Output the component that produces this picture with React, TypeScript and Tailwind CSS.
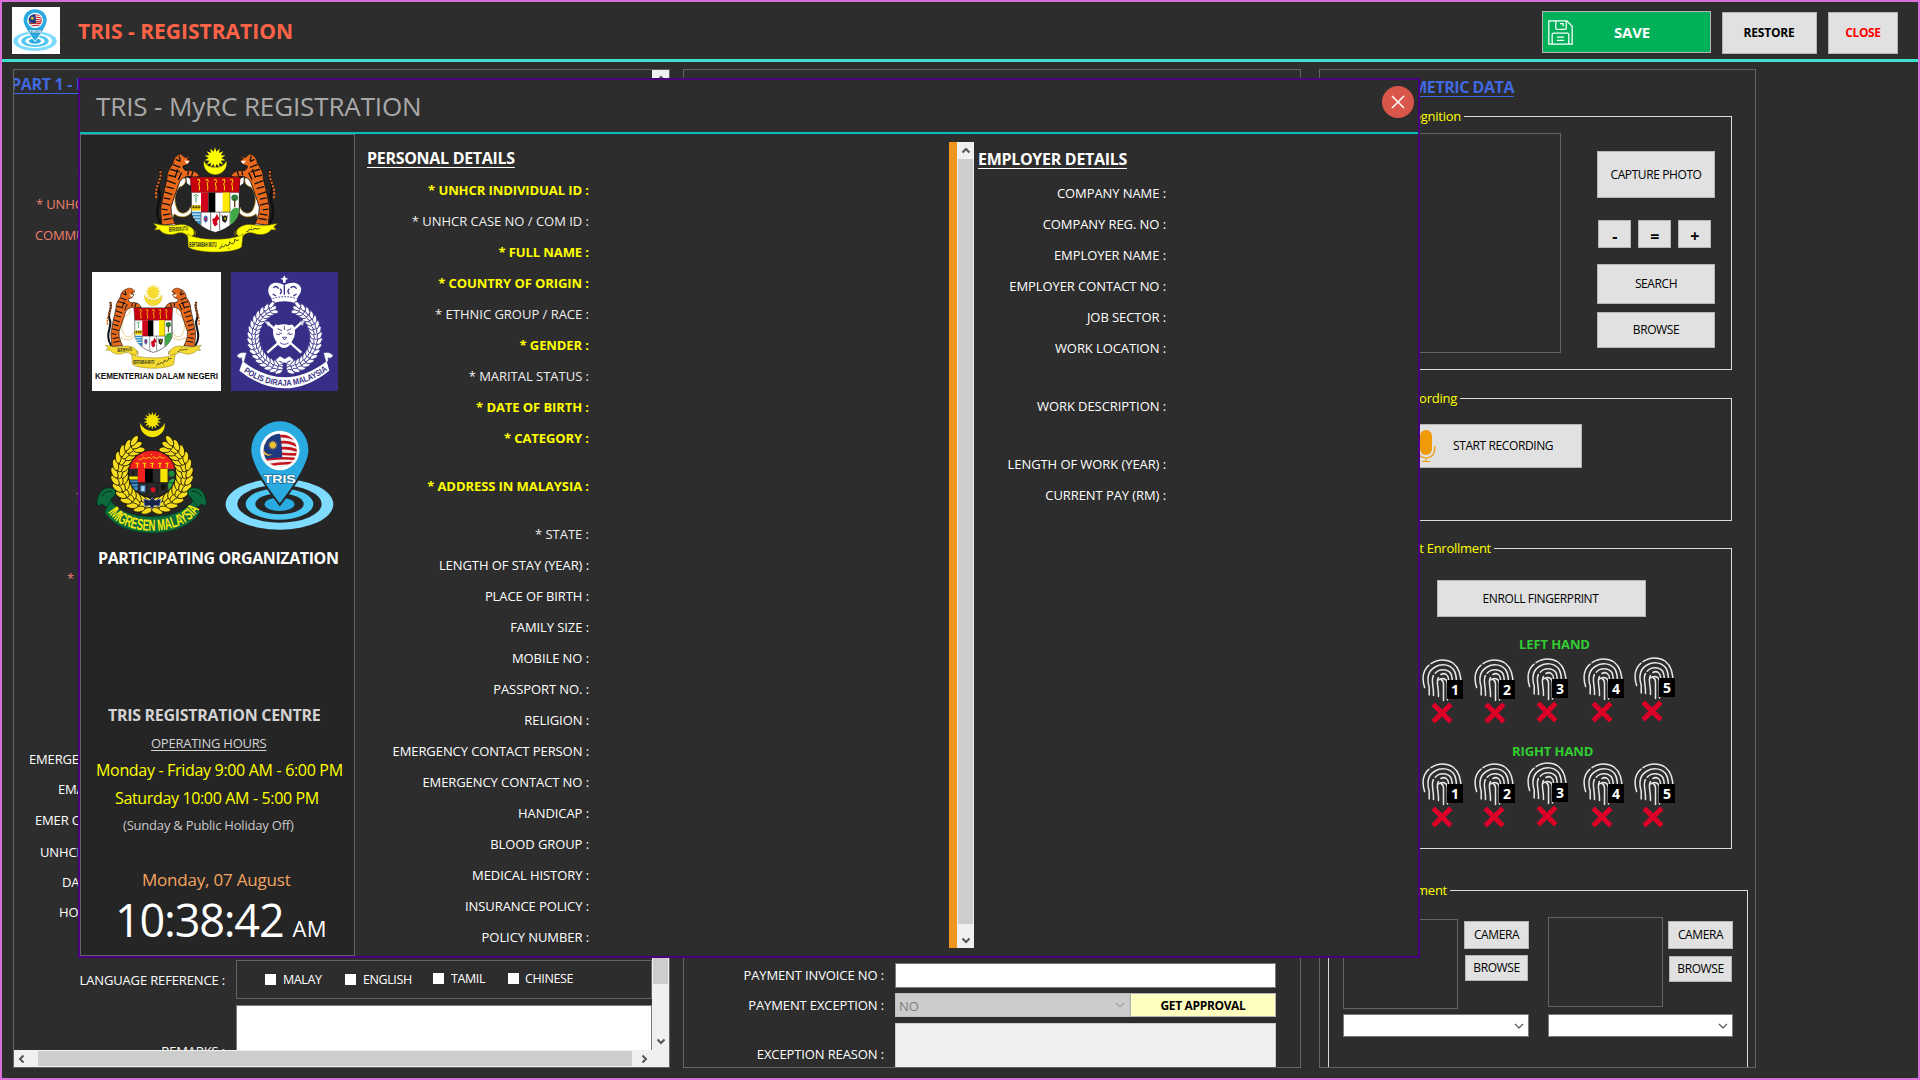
import type { ReactNode } from "react";

type Row = { text: string; h?: string; req?: boolean; dim?: boolean };

const personal: Row[] = [
  { text: "* UNHCR INDIVIDUAL ID :", req: true },
  { text: "* UNHCR CASE NO / COM ID :", dim: true },
  { text: "* FULL NAME :", req: true },
  { text: "* COUNTRY OF ORIGIN :", req: true },
  { text: "* ETHNIC GROUP / RACE :", dim: true },
  { text: "* GENDER :", req: true },
  { text: "* MARITAL STATUS :", dim: true },
  { text: "* DATE OF BIRTH :", req: true },
  { text: "* CATEGORY :", req: true },
  { text: "* ADDRESS IN MALAYSIA :", h: "h-[65px]", req: true },
  { text: "* STATE :", dim: true },
  { text: "LENGTH OF STAY (YEAR) :" },
  { text: "PLACE OF BIRTH :" },
  { text: "FAMILY SIZE :" },
  { text: "MOBILE NO :" },
  { text: "PASSPORT NO. :" },
  { text: "RELIGION :" },
  { text: "EMERGENCY CONTACT PERSON :" },
  { text: "EMERGENCY CONTACT NO :" },
  { text: "HANDICAP :" },
  { text: "BLOOD GROUP :" },
  { text: "MEDICAL HISTORY :" },
  { text: "INSURANCE POLICY :" },
  { text: "POLICY NUMBER :" },
];

const employer: Row[] = [
  { text: "COMPANY NAME :" },
  { text: "COMPANY REG. NO :" },
  { text: "EMPLOYER NAME :" },
  { text: "EMPLOYER CONTACT NO :" },
  { text: "JOB SECTOR :" },
  { text: "WORK LOCATION :" },
  { text: "WORK DESCRIPTION :", h: "h-[85px]" },
  { text: "LENGTH OF WORK (YEAR) :" },
  { text: "CURRENT PAY (RM) :" },
];

function LabelRows({ rows }: { rows: Row[] }) {
  return (
    <>
      {rows.map((r) => (
        <div
          key={r.text}
          className={`flex shrink-0 items-center justify-end text-[13px] leading-none ${r.h ?? "h-[31px]"} ${
            r.req
              ? "font-bold tracking-[-0.08px] text-[#ffff00]"
              : r.dim
                ? "tracking-[-0.02px] text-[#f0f0f0]"
                : "tracking-[-0.08px] text-white"
          }`}
        >
          {r.text}
        </div>
      ))}
    </>
  );
}

function Chevron({ dir, className = "" }: { dir: "up" | "down" | "left" | "right"; className?: string }) {
  const d = {
    up: "M1.5 6.5 L5 3 L8.5 6.5",
    down: "M1.5 3.5 L5 7 L8.5 3.5",
    left: "M6.5 1.5 L3 5 L6.5 8.5",
    right: "M3.5 1.5 L7 5 L3.5 8.5",
  }[dir];
  return (
    <svg viewBox="0 0 10 10" className={`h-[10px] w-[10px] ${className}`}>
      <path d={d} fill="none" stroke="#555" strokeWidth="2" />
    </svg>
  );
}

function starPoints(cx: number, cy: number, ro: number, ri: number, n: number) {
  return Array.from({ length: n * 2 }, (_, i) => {
    const a = (Math.PI * i) / n - Math.PI / 2;
    const r = i % 2 ? ri : ro;
    return `${(cx + r * Math.cos(a)).toFixed(1)},${(cy + r * Math.sin(a)).toFixed(1)}`;
  }).join(" ");
}

function Tiger({ dark }: { dark: string }) {
  return (
    <g>
      <path d="M242 283 C215 240 245 215 238 190 C222 165 250 145 238 120" fill="none" stroke="#111" strokeWidth="8" />
      <path d="M228 205 C222 165 250 145 238 120" fill="none" stroke="#e0641a" strokeWidth="6" strokeDasharray="7 4" />
      <path d="M300 128 C322 146 320 165 296 172 C276 200 284 230 294 244 C308 258 326 246 330 232 L336 240 C330 262 300 268 282 252 C276 262 276 276 288 288 L250 288 L262 240 Z" fill="#fff" stroke="#d8a020" strokeWidth="2" />
      <path d="M300 72 C312 64 330 70 332 82 L320 86 L330 92 L322 104 L308 108 C308 118 314 124 330 122 C344 122 354 130 358 140 L340 142 C326 136 308 140 298 156 C288 184 280 206 272 232 C272 254 278 270 286 282 L244 286 C246 266 236 246 244 220 C248 190 256 168 260 144 C260 124 270 112 278 100 C278 88 286 76 300 72 Z" fill="#e8681c" stroke="#111" strokeWidth="2.5" />
      <path d="M300 72 C312 64 328 70 332 80 L314 84 Z" fill={dark} />
      <path d="M278 104 l22 8 M270 118 l28 8 M264 136 l20 4 M260 152 l26 10 M258 170 l22 6 M252 186 l24 8 M250 204 l20 4 M246 220 l24 6 M244 238 l18 2 M248 256 l22 -4 M250 270 l24 -4 M292 118 l-8 26 M304 128 l-10 22 M324 124 l-2 12 M338 124 l-4 14 M286 88 l14 6 M296 78 l4 14" stroke="#111" strokeWidth="4" fill="none" />
      <path d="M312 92 l16 2 -8 8 z M318 142 l16 6 -4 20 -10 -8 z" fill="#fff" />
    </g>
  );
}

function CoatOfArms({ className, sun = "#ffff00", dark = "#252525" }: { className: string; sun?: string; dark?: string }) {
  return (
    <svg viewBox="218 45 375 325" preserveAspectRatio="none" className={className}>
      <polygon points={starPoints(404, 84, 32, 19, 14)} fill={sun} />
      <path d="M371 94 A34 34 0 1 0 438 94 A36 30 0 0 1 371 94 Z" fill={sun} stroke="#b8a000" strokeWidth="1" />
      <Tiger dark={dark} />
      <g transform="translate(809 0) scale(-1 1)">
        <Tiger dark={dark} />
      </g>
      <path d="M333 142 H477 V240 C477 272 440 300 405 308 C370 300 333 272 333 240 Z" fill="#fff" stroke="#111" strokeWidth="2" />
      <path d="M329 142 H480 L476 188 H334 Z" fill="#c4000f" stroke="#400" strokeWidth="1" />
      <g stroke="#ffe000" strokeWidth="3" fill="none">
        {[355, 380, 405, 430, 454].map((x) => (
          <path key={x} d={`M${x - 5} 151 l7 -3 q4 8 -2 14 q4 8 2 20`} />
        ))}
      </g>
      <rect x="362" y="188" width="22" height="59" fill="#d0021b" />
      <rect x="384" y="188" width="21" height="59" fill="#000" />
      <rect x="427" y="188" width="22" height="59" fill="#ffe800" />
      <path d="M449 188 V286 C466 274 477 258 477 240 V188" fill="none" stroke="#111" strokeWidth="1.5" />
      <path d="M450 247 Q462 228 476 236 V242 C476 260 464 276 450 285 Z" fill="#3fa845" />
      <circle cx="463" cy="204" r="10" fill="#2e7d3a" />
      <path d="M463 208 V232" stroke="#5b3b16" strokeWidth="4" />
      <path d="M347 198 V218 M340 198 q7 -8 14 0" stroke="#3a9b5c" strokeWidth="3" fill="none" />
      <path d="M334 226 H361 V242 H334 Z" fill="#f4d300" />
      <path d="M334 232 h27 M340 226 v10 M348 226 v10 M356 226 v10" stroke="#111" strokeWidth="2" />
      <path d="M334 246 H361 V286 C346 276 336 262 334 246 Z" fill="#2f8fc9" />
      <path d="M335 253 h26 M338 262 h23 M344 271 h17" stroke="#fff" strokeWidth="3" />
      <path d="M362 247 H449 M362 247 V286 M391 247 V302 M418 247 V302" stroke="#333" strokeWidth="2" />
      <path d="M370 262 q6 -10 12 0 v10 l-6 8 -6 -8 z" fill="#4a68b0" />
      <circle cx="376" cy="268" r="4" fill="#c02040" />
      <path d="M396 268 l8 -4 6 -12 4 10 4 4 -8 8 2 10 -8 6 -6 -8 z" fill="#d0021b" />
      <path d="M424 254 l6 6 4 -4 4 4 4 -6 -2 18 -6 8 -8 -6 z" fill="#222" />
      <path d="M431 264 l6 0 -3 8 z" fill="#ffe000" />
      <path d="M219 281 C240 284 262 292 288 286 C306 282 326 284 340 300 L342 312 L326 330 C322 312 308 306 292 310 C268 320 246 312 238 300 L222 300 L230 292 Z" fill={sun} stroke="#6a5d00" strokeWidth="1.5" />
      <path d="M591 281 C570 284 548 292 522 286 C504 282 484 284 470 300 L468 312 L484 330 C488 312 502 306 518 310 C542 320 564 312 572 300 L588 300 L580 292 Z" fill={sun} stroke="#6a5d00" strokeWidth="1.5" />
      <path d="M322 312 C345 334 465 334 488 312 L484 352 C462 372 348 372 324 352 Z" fill={sun} stroke="#6a5d00" strokeWidth="1.5" />
      <path d="M340 304 q8 -4 4 14 M469 304 q-8 -4 -4 14" stroke="#8a7a00" strokeWidth="3" fill="none" />
      <text x="266" y="306" fontSize="19" fontWeight="700" fontFamily="Liberation Sans" textLength="58" lengthAdjust="spacingAndGlyphs" fill="#222" transform="rotate(-4 268 308)">BERSEKUTU</text>
      <text x="327" y="353" fontSize="20" fontWeight="700" fontFamily="Liberation Sans" textLength="82" lengthAdjust="spacingAndGlyphs" fill="#222">BERTAMBAH MUTU</text>
      <path d="M416 356 q6 2 8 -8 q6 10 12 -4 q2 8 10 2 l2 -10 q6 12 14 2 l2 -10 q2 8 12 2 M424 344 l2 -2 M444 356 l3 0 M498 306 q8 0 10 -8 q8 6 16 -2 q6 4 14 0 M512 292 l3 0" stroke="#222" strokeWidth="2.5" fill="none" />
    </svg>
  );
}

function Leaves({ cx, cy, r, from, to, n, len, wid, fill, stroke }: { cx: number; cy: number; r: number; from: number; to: number; n: number; len: number; wid: number; fill: string; stroke: string }) {
  return (
    <g fill={fill} stroke={stroke} strokeWidth="2.5">
      {Array.from({ length: n }, (_, i) => {
        const deg = from + ((to - from) * i) / (n - 1);
        const dir = to > from ? 1 : -1;
        return [-1, 0, 1].map((k) => {
          const a = (deg * Math.PI) / 180;
          const rr = r + k * wid * 1.1;
          return (
            <ellipse
              key={`${i}${k}`}
              cx={cx + rr * Math.cos(a)}
              cy={cy + rr * Math.sin(a)}
              rx={len}
              ry={wid / 1.6}
              transform={`rotate(${deg + 90 - k * dir * 28} ${cx + rr * Math.cos(a)} ${cy + rr * Math.sin(a)})`}
            />
          );
        });
      })}
    </g>
  );
}

function PoliceBadge() {
  return (
    <svg viewBox="453 426 321 357" preserveAspectRatio="none" className="h-[119px] w-[107px] bg-[#372f87]">
      <g fill="#fff">
        <path d="M613 436 l4 8 8 2 -8 4 v8 h-8 v-8 l-8 -4 8 -2 z" />
        <path d="M566 474 C572 452 600 456 613 466 C626 456 656 452 663 474 C666 486 656 496 652 504 L648 520 Q613 508 578 520 L574 504 C568 496 562 486 566 474 Z" />
      </g>
      <path d="M580 474 q8 -10 16 2 M600 492 q8 -8 0 -16 M628 492 q-8 -8 0 -16 M632 474 q8 -10 18 2 M578 492 l10 6 M640 498 l10 -6 M613 466 v28" stroke="#372f87" strokeWidth="4" fill="none" />
      <path d="M578 506 Q613 494 650 506" stroke="#372f87" strokeWidth="3" fill="none" strokeDasharray="5 4" />
      <Leaves cx={614} cy={622} r={94} from={100} to={248} n={17} len={12} wid={10} fill="#fff" stroke="#372f87" />
      <Leaves cx={614} cy={622} r={94} from={80} to={-68} n={17} len={12} wid={10} fill="#fff" stroke="#372f87" />
      <path d="M562 578 L664 668 M664 578 L562 668" stroke="#fff" strokeWidth="7" />
      <path d="M552 572 l18 4 -4 14 z M676 566 l-18 10 10 12 z" fill="#fff" opacity="0.7" />
      <path d="M582 590 q4 -10 12 -4 q18 -6 34 0 q10 -6 14 4 q8 20 -4 40 q-10 24 -26 24 q-16 0 -26 -24 q-12 -20 -4 -40" fill="#fff" />
      <path d="M592 596 l14 6 M634 596 l-14 6 M588 612 l12 2 M638 612 l-12 2 M598 608 l8 4 M630 608 l-8 4 M607 622 h13 l-6 8 z M600 638 q14 10 26 0 M613 588 v12" stroke="#372f87" strokeWidth="2.5" fill="none" />
      <path d="M586 690 l14 -12 14 8 14 -8 14 12 -12 16 -16 -8 -16 8 z" fill="#fff" stroke="#372f87" strokeWidth="2" />
      <path d="M598 694 l10 4 M620 698 l12 -6" stroke="#372f87" strokeWidth="3" />
      <path d="M500 668 q-22 -4 -30 10 q8 10 16 6 q-4 10 6 14 z M730 668 q22 -4 30 10 q-8 10 -16 6 q4 10 -6 14 z" fill="#fff" stroke="#372f87" strokeWidth="2" />
      <path d="M488 694 Q614 790 740 694 L748 722 Q614 828 478 722 Z" fill="#fff" />
      <path id="pdrm-banner" d="M487 723 Q614 812 742 721" fill="none" />
      <text fontSize="25" fontWeight="700" fontFamily="Liberation Sans" fill="#372f87">
        <textPath href="#pdrm-banner" startOffset="4" textLength="272" lengthAdjust="spacingAndGlyphs">
          POLIS DIRAJA MALAYSIA
        </textPath>
      </text>
    </svg>
  );
}

function ImmigrationBadge() {
  return (
    <svg viewBox="48 60 338 372" preserveAspectRatio="none" className="h-[123px] w-[112px]">
      <polygon points={starPoints(218, 89, 27, 16, 14)} fill="#f5e400" />
      <path d="M182 96 A37 37 0 1 0 255 96 A38 34 0 0 1 182 96 Z" fill="#f5e400" />
      <Leaves cx={217} cy={250} r={98} from={98} to={242} n={13} len={18} wid={14} fill="#f5dc1e" stroke="#1a1600" />
      <Leaves cx={217} cy={250} r={98} from={82} to={-62} n={13} len={18} wid={14} fill="#f5dc1e" stroke="#1a1600" />
      <clipPath id="imi-disc">
        <circle cx="217" cy="250" r="71" />
      </clipPath>
      <g clipPath="url(#imi-disc)">
        <rect x="140" y="175" width="160" height="160" fill="#2a2a2a" />
        <rect x="140" y="175" width="160" height="60" fill="#f0201e" />
        <rect x="174" y="235" width="22" height="41" fill="#f0201e" />
        <rect x="196" y="235" width="23" height="41" fill="#000" />
        <rect x="242" y="235" width="22" height="41" fill="#f5e400" />
        <rect x="147" y="258" width="27" height="9" fill="#f5e400" />
        <rect x="147" y="270" width="27" height="30" fill="#3a90cc" />
        <path d="M147 279 h27 M147 289 h27" stroke="#1c4c70" strokeWidth="3" />
        <path d="M266 276 q8 -14 24 -10 v20 q-8 14 -18 18 l-6 -8 z" fill="#2faa4a" />
        <circle cx="276" cy="250" r="9" fill="#1f8a3a" />
        <path d="M160 242 v14" stroke="#111" strokeWidth="4" />
        <rect x="183" y="286" width="13" height="18" fill="#a9d7f0" stroke="#3468b0" strokeWidth="3" />
        <path d="M212 294 l10 -4 6 6 -2 8 -10 2 z" fill="#e01020" />
        <path d="M242 282 l18 0 -4 18 -10 0 z" fill="#111" />
        <path d="M203 278 v34 M233 278 v34 M147 277 h140" stroke="#111" strokeWidth="2" />
      </g>
      <path d="M176 204 q10 8 14 -4 q8 8 18 0 q8 8 14 -2 q8 10 18 0 q8 6 16 4 M186 194 h3 M214 192 h3 M240 192 h3" stroke="#f5e400" strokeWidth="2.5" fill="none" />
      <g stroke="#f5e400" strokeWidth="3.5" fill="none">
        {[172, 194, 217, 240, 262].map((x) => (
          <path key={x} d={`M${x - 5} 218 l8 0 q-4 6 -2 14`} />
        ))}
      </g>
      <circle cx="217" cy="250" r="71" fill="none" stroke="#111" strokeWidth="2" />
      <path d="M50 338 C54 300 76 286 100 294 C112 300 108 318 96 324 L84 354 L66 342 L56 348 Z M382 338 C378 300 356 286 332 294 C320 300 324 318 336 324 L348 354 L368 342 L378 348 Z" fill="#0c6b3c" stroke="#052a18" strokeWidth="3" />
      <path d="M66 318 q14 -20 30 -14 M366 318 q-14 -20 -30 -14" stroke="#052a18" strokeWidth="3" fill="none" />
      <path d="M92 330 C130 396 304 396 342 330 L362 366 C310 450 124 450 74 366 Z" fill="#0c6b3c" stroke="#06351e" strokeWidth="2" />
      <path d="M192 326 l18 4 8 -8 8 8 18 -4 -4 22 -16 -2 -6 12 -8 -12 -16 2 z" fill="#16234a" stroke="#8fb0e0" strokeWidth="2" />
      <path id="imi-banner" d="M82 364 C130 442 306 442 356 362" fill="none" />
      <text fontSize="48" fontWeight="700" fontFamily="Liberation Sans" fill="#f8ec10">
        <textPath href="#imi-banner" startOffset="3" textLength="314" lengthAdjust="spacingAndGlyphs">
          IMIGRESEN MALAYSIA
        </textPath>
      </text>
    </svg>
  );
}

function TrisLogo({ className, gap, id }: { className: string; gap: string; id: string }) {
  return (
    <svg viewBox="436 92 328 326" preserveAspectRatio="none" className={className}>
      <ellipse cx="600" cy="341" rx="162" ry="76" fill="#80dcff" />
      <ellipse cx="600" cy="340" rx="127" ry="56" fill={gap} />
      <ellipse cx="600" cy="340" rx="102" ry="47" fill="#4cc6f2" />
      <ellipse cx="600" cy="340" rx="73" ry="31" fill={gap} />
      <ellipse cx="600" cy="341" rx="45" ry="20" fill="#29abe2" />
      <path d="M601 338 C580 312 515 226 515 179 A86 86 0 0 1 687 179 C687 226 622 312 601 338 Z" fill="#29abe2" stroke={gap} strokeWidth="12" />
      <path d="M601 338 C580 312 515 226 515 179 A86 86 0 0 1 687 179 C687 226 622 312 601 338 Z" fill="#29abe2" />
      <circle cx="601" cy="180" r="59" fill="#fff" />
      <clipPath id={id}>
        <circle cx="602" cy="180" r="50" />
      </clipPath>
      <g clipPath={`url(#${id})`}>
        <rect x="550" y="128" width="104" height="104" fill="#f0f0f0" />
        <g fill="none" stroke="#c4161c" strokeWidth="8">
          <path d="M596 138 q30 -4 60 14" />
          <path d="M600 156 q30 -4 56 12" />
          <path d="M602 174 q30 -4 54 8" />
          <path d="M602 190 q30 2 54 2" />
          <path d="M552 208 q50 -8 102 -2" />
          <path d="M556 226 q50 -10 92 -8" />
        </g>
        <path d="M550 128 L600 126 Q608 160 608 202 Q580 200 550 208 Z" fill="#1d3a80" />
        <path d="M562 156 a20 20 0 1 0 18 34 a18 18 0 1 1 -18 -34" fill="#f2c230" />
        <polygon points={starPoints(580, 164, 15, 8, 12)} fill="#f2c230" />
      </g>
      <text x="552" y="277" fontSize="34" fontWeight="700" fontFamily="Liberation Sans" textLength="97" lengthAdjust="spacingAndGlyphs" stroke="#1c6f9a" strokeWidth="4" paintOrder="stroke" fill="#fff">TRIS</text>
    </svg>
  );
}

function WinButton({ children, className }: { children: ReactNode; className: string }) {
  return (
    <button className={`flex shrink-0 items-center justify-center border border-[#b5b5b5] bg-[#e1e1e1] text-[12px] leading-none tracking-[-0.4px] whitespace-nowrap text-black ${className}`}>
      {children}
    </button>
  );
}

function GroupBox({ legend, legendPos, className, children }: { legend: string; legendPos: string; className: string; children: ReactNode }) {
  return (
    <section className={`relative shrink-0 border border-[#dcdcdc] ${className}`}>
      <span className={`absolute -top-[9px] bg-[#2d2d2d] pr-[3px] text-[13px] leading-[17px] tracking-[-0.25px] whitespace-nowrap text-[#ffff00] ${legendPos}`}>{legend}</span>
      {children}
    </section>
  );
}

function Finger({ n, className, mark = "left-[9px]" }: { n: number; className: string; mark?: string }) {
  return (
    <div className={`relative h-[66px] w-[42px] shrink-0 ${className}`}>
      <svg viewBox="0 0 42 44" className="h-[44px] w-[42px]" fill="none" stroke="#e8e8e8" strokeWidth="1.5" strokeLinecap="round">
        <path d="M2.6 28.5 C0 20 0 12 7 6.2" />
        <path d="M9 4.6 C16 -.4 25 0 31 4 C37 8.500 39.500 15 39 27" />
        <path d="M7.200 36 V28 C4.500 19 6 12 13 8 C19 4.500 27 5 31.500 10.500 C34 14 34.500 18 34.500 24" />
        <path d="M11.500 36.500 C12 27 8.500 21 11.500 16.500 M13.200 14.200 C17 9.500 25 9.500 28.500 14 C30.500 17 30.200 20 30.500 26" />
        <path d="M16.500 37.500 C17 28 13.500 23 16.500 18.500 M19 15.500 C23 13 26.500 16.500 26.500 20 V30" />
        <path d="M21.500 41.500 V25 C21.500 22.500 20 21 19 20.500 M16.500 21 C20 18 25 19.500 25.300 24 L25.500 41" />
      </svg>
      <span className="absolute top-[21px] left-[25px] flex h-[19px] w-4 items-center justify-center bg-black pt-px text-[14px] leading-none font-bold text-white">{n}</span>
      <svg viewBox="0 0 22 22" className={`absolute top-[43px] h-[22px] w-[22px] ${mark}`}>
        <path d="M2.200 2.200 L19.800 19.800 M19.800 2.200 L2.200 19.800" stroke="#dc0028" strokeWidth="5" />
      </svg>
    </div>
  );
}

function Select({ className }: { className: string }) {
  return (
    <div className={`flex h-[23px] shrink-0 items-center justify-end border border-[#7a7a7a] bg-white pr-1 ${className}`}>
      <svg viewBox="0 0 10 10" className="h-[10px] w-[10px]">
        <path d="M1 3 L5 7 L9 3" fill="none" stroke="#555" strokeWidth="1.200" />
      </svg>
    </div>
  );
}

function LeftPanel() {
  const label = "flex shrink-0 items-center text-[13px] leading-none tracking-[-0.15px] whitespace-nowrap";
  return (
    <section className="flex h-[999px] w-[657px] shrink-0 flex-col border border-[#646464]">
      <div className="flex h-[980px]">
        <div className="flex w-[638px] flex-col overflow-hidden">
          <div className="-ml-[3px] flex h-[27px] shrink-0 items-center text-[16px] leading-none font-bold tracking-[-0.3px] text-[#4169e1] underline underline-offset-[3px]">PART 1 - PERSONAL</div>
          <div className={`${label} mt-[59px] h-8 pl-[63px] text-[#f0806e]`}>*</div>
          <div className={`${label} h-8 pl-[22px] text-[#f0806e]`}>* UNHCR ID</div>
          <div className={`${label} h-[30px] pl-[21px] text-[#f0806e]`}>COMMUNITY</div>
          <div className={`${label} mt-[230px] h-8 pl-[62px] text-[#f0806e]`}>*</div>
          <div className={`${label} mt-[50px] h-8 pl-[53px] text-[#f0806e]`}>*</div>
          <div className={`${label} mt-[150px] h-[31px] pl-[15px] text-white`}>EMERGENCY</div>
          <div className={`${label} h-[29px] pl-[44px] text-white`}>EMAIL</div>
          <div className={`${label} h-[33px] pl-[21px] text-white`}>EMER CONTACT</div>
          <div className={`${label} h-[31px] pl-[26px] text-white`}>UNHCR</div>
          <div className={`${label} h-[29px] pl-[48px] text-white`}>DATE</div>
          <div className={`${label} h-[30px] pl-[45px] text-white`}>HOME</div>
          <div className="mt-[33px] flex h-[39px] shrink-0">
            <div className={`${label} w-[222px] justify-end pt-[2px] pr-[11px] text-white`}>LANGUAGE REFERENCE :</div>
            <div className="flex w-[416px] items-center border border-[#646464] pt-[2px] pl-7 text-[12.5px] leading-none tracking-[-0.4px] text-white">
              <i className="-mt-[2px] h-[11px] w-[11px] bg-white" />
              <span className="w-[62px] shrink-0 pl-[7px]">MALAY</span>
              <i className="-mt-[2px] ml-[7px] h-[11px] w-[11px] bg-white" />
              <span className="w-[70px] shrink-0 pl-[7px]">ENGLISH</span>
              <i className="-mt-1 ml-[7px] h-[11px] w-[11px] bg-white" />
              <span className="-mt-[2px] w-[58px] shrink-0 pl-[7px]">TAMIL</span>
              <i className="-mt-1 ml-[6px] h-[11px] w-[11px] bg-white" />
              <span className="-mt-[2px] pl-[6px]">CHINESE</span>
            </div>
          </div>
          <div className="mt-[6px] flex h-[45px] shrink-0 overflow-hidden">
            <div className="flex w-[222px] shrink-0 items-start justify-end pt-[37px] pr-[11px] text-[13px] leading-[18px] tracking-[-0.15px] text-white">REMARKS :</div>
            <div className="h-[60px] w-[416px] border border-[#7a7a7a] bg-white" />
          </div>
        </div>
        <div className="flex w-[17px] flex-col items-center bg-[#f0f0f0]">
          <div className="flex h-[17px] w-full shrink-0 items-center justify-center">
            <Chevron dir="up" />
          </div>
          <div className="h-[897px] w-[15px] shrink-0 bg-[#cdcdcd]" />
          <div className="flex flex-1 items-end pb-1">
            <Chevron dir="down" />
          </div>
        </div>
      </div>
      <div className="flex h-[17px] items-center bg-[#f0f0f0]">
        <div className="flex w-6 items-center pl-[3px]">
          <Chevron dir="left" />
        </div>
        <div className="h-[15px] w-[594px] bg-[#cdcdcd]" />
        <div className="flex items-center pl-[7px]">
          <Chevron dir="right" />
        </div>
      </div>
    </section>
  );
}

function PaymentPanel() {
  const label = "flex w-[200px] shrink-0 items-center justify-end text-[13px] leading-none tracking-[-0.12px] text-white";
  return (
    <section className="ml-[13px] flex h-[999px] w-[618px] shrink-0 flex-col overflow-hidden border border-[#646464] pt-[893px]">
      <div className="flex h-[25px] shrink-0">
        <div className={label}>PAYMENT INVOICE NO :</div>
        <div className="ml-[11px] w-[381px] border border-[#7a7a7a] bg-white" />
      </div>
      <div className="mt-[5px] flex h-6 shrink-0">
        <div className={label}>PAYMENT EXCEPTION :</div>
        <div className="ml-[11px] flex w-[235px] items-center justify-between border border-[#bfbfbf] bg-[#cccccc] pr-1 pl-[3px] text-[13px] leading-none text-[#7e7e7e]">
          <span className="pt-[2px]">NO</span>
          <svg viewBox="0 0 10 10" className="h-[10px] w-[10px]">
            <path d="M1 3 L5 7 L9 3" fill="none" stroke="#a0a0a0" strokeWidth="1.200" />
          </svg>
        </div>
        <button className="w-[146px] border border-[#b5b5b5] bg-[#ffffc0] pt-px text-[12px] leading-none font-bold tracking-[-0.35px] text-black">GET APPROVAL</button>
      </div>
      <div className="mt-[6px] flex h-[62px] shrink-0">
        <div className={label}>EXCEPTION REASON :</div>
        <div className="ml-[11px] w-[381px] border border-[#cccccc] bg-[#f0f0f0]" />
      </div>
    </section>
  );
}

function BiometricPanel() {
  return (
    <section className="ml-[18px] flex h-[999px] w-[437px] shrink-0 flex-col overflow-hidden border border-[#646464] pl-2">
      <div className="flex h-[33px] w-[186px] shrink-0 items-center justify-end text-[16px] leading-none font-bold tracking-[-0.45px] whitespace-nowrap text-[#4169e1] underline underline-offset-[3px]">BIOMETRIC DATA</div>
      <GroupBox legend="Facial Recognition" legendPos="right-[267px]" className="mt-[13px] flex h-[254px] w-[404px] pt-4 pl-[14px]">
        <div className="h-[220px] w-[218px] shrink-0 border border-[#646464]" />
        <div className="ml-[36px] flex w-[118px] shrink-0 flex-col pt-[18px]">
          <WinButton className="h-[47px] w-[118px]">CAPTURE PHOTO</WinButton>
          <div className="mt-[22px] flex gap-[7px] pl-px">
            {["-", "=", "+"].map((s) => (
              <WinButton key={s} className="h-7 w-[33px] pt-[3px] text-[16px] font-bold">
                {s}
              </WinButton>
            ))}
          </div>
          <WinButton className="mt-4 h-10 w-[118px]">SEARCH</WinButton>
          <WinButton className="mt-2 h-9 w-[118px]">BROWSE</WinButton>
        </div>
      </GroupBox>
      <GroupBox legend="Voice Recording" legendPos="right-[271px]" className="mt-7 h-[123px] w-[404px] pt-[25px] pl-[76px]">
        <button className="flex h-[44px] w-[177px] items-center border border-[#b5b5b5] bg-[#e1e1e1] pl-[10px] text-[12px] leading-none tracking-[-0.4px] text-black">
          <svg viewBox="0 0 20 34" className="h-[34px] w-5 shrink-0" fill="none" stroke="#f09a0a" strokeWidth="1.200">
            <rect x="4" y="1" width="12" height="25" rx="6" fill="#f09a0a" stroke="none" />
            <path d="M1.200 17 V20 C1.200 32 18.800 32 18.800 20 V17 M10 29 V32 M6 32.500 H14" />
          </svg>
          <span className="pl-[17px] whitespace-nowrap">START RECORDING</span>
        </button>
      </GroupBox>
      <GroupBox legend="Fingerprint Enrollment" legendPos="right-[237px]" className="mt-[27px] flex h-[301px] w-[404px] flex-col pt-[31px]">
        <WinButton className="ml-[108px] h-[37px] w-[209px] pr-[2px]">ENROLL FINGERPRINT</WinButton>
        <div className="mt-[17px] ml-[190px] flex h-5 shrink-0 items-center text-[13px] leading-none font-bold tracking-[-0.1px] text-[#32cd32]">LEFT HAND</div>
        <div className="mt-[3px] flex shrink-0 pl-[93px]">
          <Finger n={1} className="mt-[2px]" />
          <Finger n={2} className="mt-[2px] ml-[10px]" mark="left-[10px]" />
          <Finger n={3} className="mt-px ml-[11px]" />
          <Finger n={4} className="mt-px ml-[14px]" mark="left-[8px]" />
          <Finger n={5} className="ml-[9px]" mark="left-[7px]" />
        </div>
        <div className="mt-[16px] ml-[183px] flex h-5 shrink-0 items-center text-[13px] leading-none font-bold tracking-[-0.1px] text-[#32cd32]">RIGHT HAND</div>
        <div className="mt-px flex shrink-0 pl-[93px]">
          <Finger n={1} className="mt-px" />
          <Finger n={2} className="mt-px ml-[10px]" />
          <Finger n={3} className="ml-[11px]" />
          <Finger n={4} className="mt-px ml-[14px]" mark="left-[8px]" />
          <Finger n={5} className="mt-px ml-[9px]" mark="left-[8px]" />
        </div>
      </GroupBox>
      <GroupBox legend="Document Attachment" legendPos="right-[297px]" className="mt-[41px] flex h-[190px] w-[420px] pl-[14px]">
        <div className="w-[186px] shrink-0 pt-7">
          <div className="flex h-[95px] justify-between">
            <div className="h-[90px] w-[115px] border border-[#646464]" />
            <div className="flex flex-col items-center pt-[2px]">
              <WinButton className="h-7 w-[65px]">CAMERA</WinButton>
              <WinButton className="mt-[6px] h-[26px] w-[63px]">BROWSE</WinButton>
            </div>
          </div>
          <Select className="w-[186px]" />
        </div>
        <div className="ml-[19px] w-[185px] shrink-0 pt-[26px]">
          <div className="flex h-[97px] justify-between">
            <div className="h-[90px] w-[115px] border border-[#646464]" />
            <div className="flex flex-col items-center pt-1">
              <WinButton className="h-7 w-[65px]">CAMERA</WinButton>
              <WinButton className="mt-[7px] h-[26px] w-[63px]">BROWSE</WinButton>
            </div>
          </div>
          <Select className="w-[185px]" />
        </div>
      </GroupBox>
    </section>
  );
}

function Sidebar() {
  return (
    <aside className="flex h-[822px] w-[275px] shrink-0 flex-col border border-[#646464] bg-[#252525]">
      <CoatOfArms className="mt-[10px] ml-[72px] h-[108px] w-[125px] shrink-0" />
      <div className="mt-[19px] ml-[11px] flex shrink-0 gap-[10px]">
        <div className="h-[119px] w-[129px] bg-white pt-[10px]">
          <CoatOfArms className="ml-[13px] h-[87px] w-[97px]" sun="#f6dc30" dark="#e0641a" />
          <svg viewBox="0 0 129 14" className="-mt-px h-[14px] w-[129px]">
            <text x="3" y="10.5" fontSize="9" fontWeight="700" fontFamily="Liberation Sans" textLength="123" lengthAdjust="spacingAndGlyphs" fill="#111">KEMENTERIAN DALAM NEGERI</text>
          </svg>
        </div>
        <PoliceBadge />
      </div>
      <div className="mt-5 ml-[15px] flex shrink-0">
        <ImmigrationBadge />
        <TrisLogo className="mt-[10px] ml-[17px] h-[109px] w-[109px]" gap="#252525" id="flag-side" />
      </div>
      <div className="mt-[14px] ml-[17px] flex h-5 shrink-0 items-center text-[16px] leading-none font-bold tracking-[-0.4px] whitespace-nowrap text-white">PARTICIPATING ORGANIZATION</div>
      <div className="mt-[137px] ml-[27px] flex h-5 shrink-0 items-center text-[16px] leading-none font-bold tracking-[-0.3px] whitespace-nowrap text-[#d3d3d3]">TRIS REGISTRATION CENTRE</div>
      <div className="mt-2 ml-[70px] h-5 shrink-0 text-[13px] leading-5 tracking-[-0.25px] text-[#d3d3d3] underline underline-offset-[2px]">OPERATING HOURS</div>
      <div className="mt-[7px] ml-[15px] flex h-5 shrink-0 items-center text-[16px] leading-none tracking-[-0.32px] whitespace-nowrap text-[#ffff00]">Monday - Friday 9:00 AM - 6:00 PM</div>
      <div className="mt-2 ml-[34px] flex h-5 shrink-0 items-center text-[16px] leading-none tracking-[-0.35px] whitespace-nowrap text-[#ffff00]">Saturday 10:00 AM - 5:00 PM</div>
      <div className="mt-[7px] ml-[42px] flex h-5 shrink-0 items-center text-[13px] leading-none tracking-[-0.2px] whitespace-nowrap text-[#c8c8c8]">(Sunday &amp; Public Holiday Off)</div>
      <div className="mt-[34px] ml-[61px] flex h-5 shrink-0 items-center text-[17px] leading-none tracking-[-0.2px] whitespace-nowrap text-[#f4a460]">Monday, 07 August</div>
      <div className="mt-[6px] ml-[34px] flex h-[50px] shrink-0 items-baseline leading-[50px] whitespace-nowrap text-white">
        <span className="text-[45px] tracking-[-1.2px]">10:38:42</span>
        <span className="ml-[9px] text-[22px] tracking-[0.5px]">AM</span>
      </div>
    </aside>
  );
}

function RegistrationDialog() {
  const heading = "flex h-5 shrink-0 items-center text-[16px] leading-none font-bold tracking-[-0.3px] whitespace-nowrap text-white underline underline-offset-[3px]";
  return (
    <div className="absolute top-[76px] left-[76px] flex h-[880px] w-[1342px] flex-col border-2 border-[#4b0082] bg-[#2d2d2d]">
      <header className="flex h-[54px] shrink-0 justify-between border-b-2 border-[#00c0c0] pl-4">
        <h2 className="pt-[3px] text-[26px] leading-[46px] tracking-[-0.12px] text-[#a9a9a9]">TRIS - MyRC REGISTRATION</h2>
        <span className="mt-[6px] mr-[4px] flex h-8 w-8 items-center justify-center rounded-full bg-[#d9574a]">
          <svg viewBox="0 0 14 14" className="h-[14px] w-[14px]">
            <path d="M1 1 L13 13 M13 1 L1 13" stroke="#fff" strokeWidth="1.500" />
          </svg>
        </span>
      </header>
      <div className="flex flex-1">
        <Sidebar />
        <div className="flex w-[234px] shrink-0 flex-col pt-[14px] pl-3">
          <div className={heading}>PERSONAL DETAILS</div>
          <div className="flex flex-col pt-[7px]">
            <LabelRows rows={personal} />
          </div>
        </div>
        <div className="mt-2 ml-[360px] flex h-[806px] w-[25px] shrink-0">
          <div className="w-2 bg-[#f0961e]" />
          <div className="flex w-[17px] flex-col items-center bg-[#f0f0f0]">
            <div className="flex h-[17px] items-center justify-center">
              <Chevron dir="up" />
            </div>
            <div className="h-[765px] w-[15px] bg-[#cdcdcd]" />
            <div className="flex flex-1 items-end pb-[3px]">
              <Chevron dir="down" />
            </div>
          </div>
        </div>
        <div className="flex w-[192px] shrink-0 flex-col pt-[15px] pl-1">
          <div className={heading}>EMPLOYER DETAILS</div>
          <div className="flex flex-col pt-[9px]">
            <LabelRows rows={employer} />
          </div>
        </div>
      </div>
    </div>
  );
}

export default function App() {
  return (
    <div className="relative flex h-[1080px] w-[1920px] flex-col overflow-hidden border-2 border-[#da70d6] bg-[#2d2d2d] font-['Open_Sans',sans-serif]">
      <header className="flex h-[60px] shrink-0 border-b-[3px] border-[#40e0d0]">
        <div className="mt-[5px] ml-[10px] flex h-[47px] w-12 items-start bg-white pt-[2px] pl-px">
          <TrisLogo className="h-[42px] w-[44px]" gap="#ffffff" id="flag-head" />
        </div>
        <h1 className="mt-[10px] ml-[18px] text-[21px] leading-[38px] font-bold text-[#ff6347]">TRIS - REGISTRATION</h1>
        <div className="ml-auto flex">
          <button className="mt-[9px] flex h-[42px] w-[169px] items-center border border-[#b5b5b5] bg-[#00b15a] pl-[5px]">
            <svg viewBox="0 0 24 24" className="h-[25px] w-[25px]" fill="none" stroke="#fff" strokeWidth="1.200">
              <path d="M.8 .8 H18 L23.200 6 V23.200 H.8 Z M7.500 .8 V8 Q7.500 9 8.500 9 H16.500 Q17.500 9 17.500 8 V.8 M4 23.200 V14 Q4 12.500 5.500 12.500 H18.500 Q20 12.500 20 14 V23.200 M8.500 16.500 H15.500 M8.500 19.500 H15.500 M11.500 3.500 H14.500 V6" />
            </svg>
            <span className="flex-1 pr-[19px] text-center text-[15px] leading-none font-bold tracking-[-0.2px] text-white">SAVE</span>
          </button>
          <button className="mt-[10px] ml-[11px] h-[42px] w-[95px] border border-[#b5b5b5] bg-[#e1e1e1] pr-px text-[12px] leading-none font-bold tracking-[-0.2px] text-black">RESTORE</button>
          <button className="mt-[10px] mr-5 ml-[11px] h-[42px] w-[70px] border border-[#b5b5b5] bg-[#e1e1e1] text-[12px] leading-none font-bold tracking-[-0.4px] text-[#ff0000]">CLOSE</button>
        </div>
      </header>
      <main className="flex pt-[7px] pl-[11px]">
        <LeftPanel />
        <PaymentPanel />
        <BiometricPanel />
      </main>
      <RegistrationDialog />
    </div>
  );
}
